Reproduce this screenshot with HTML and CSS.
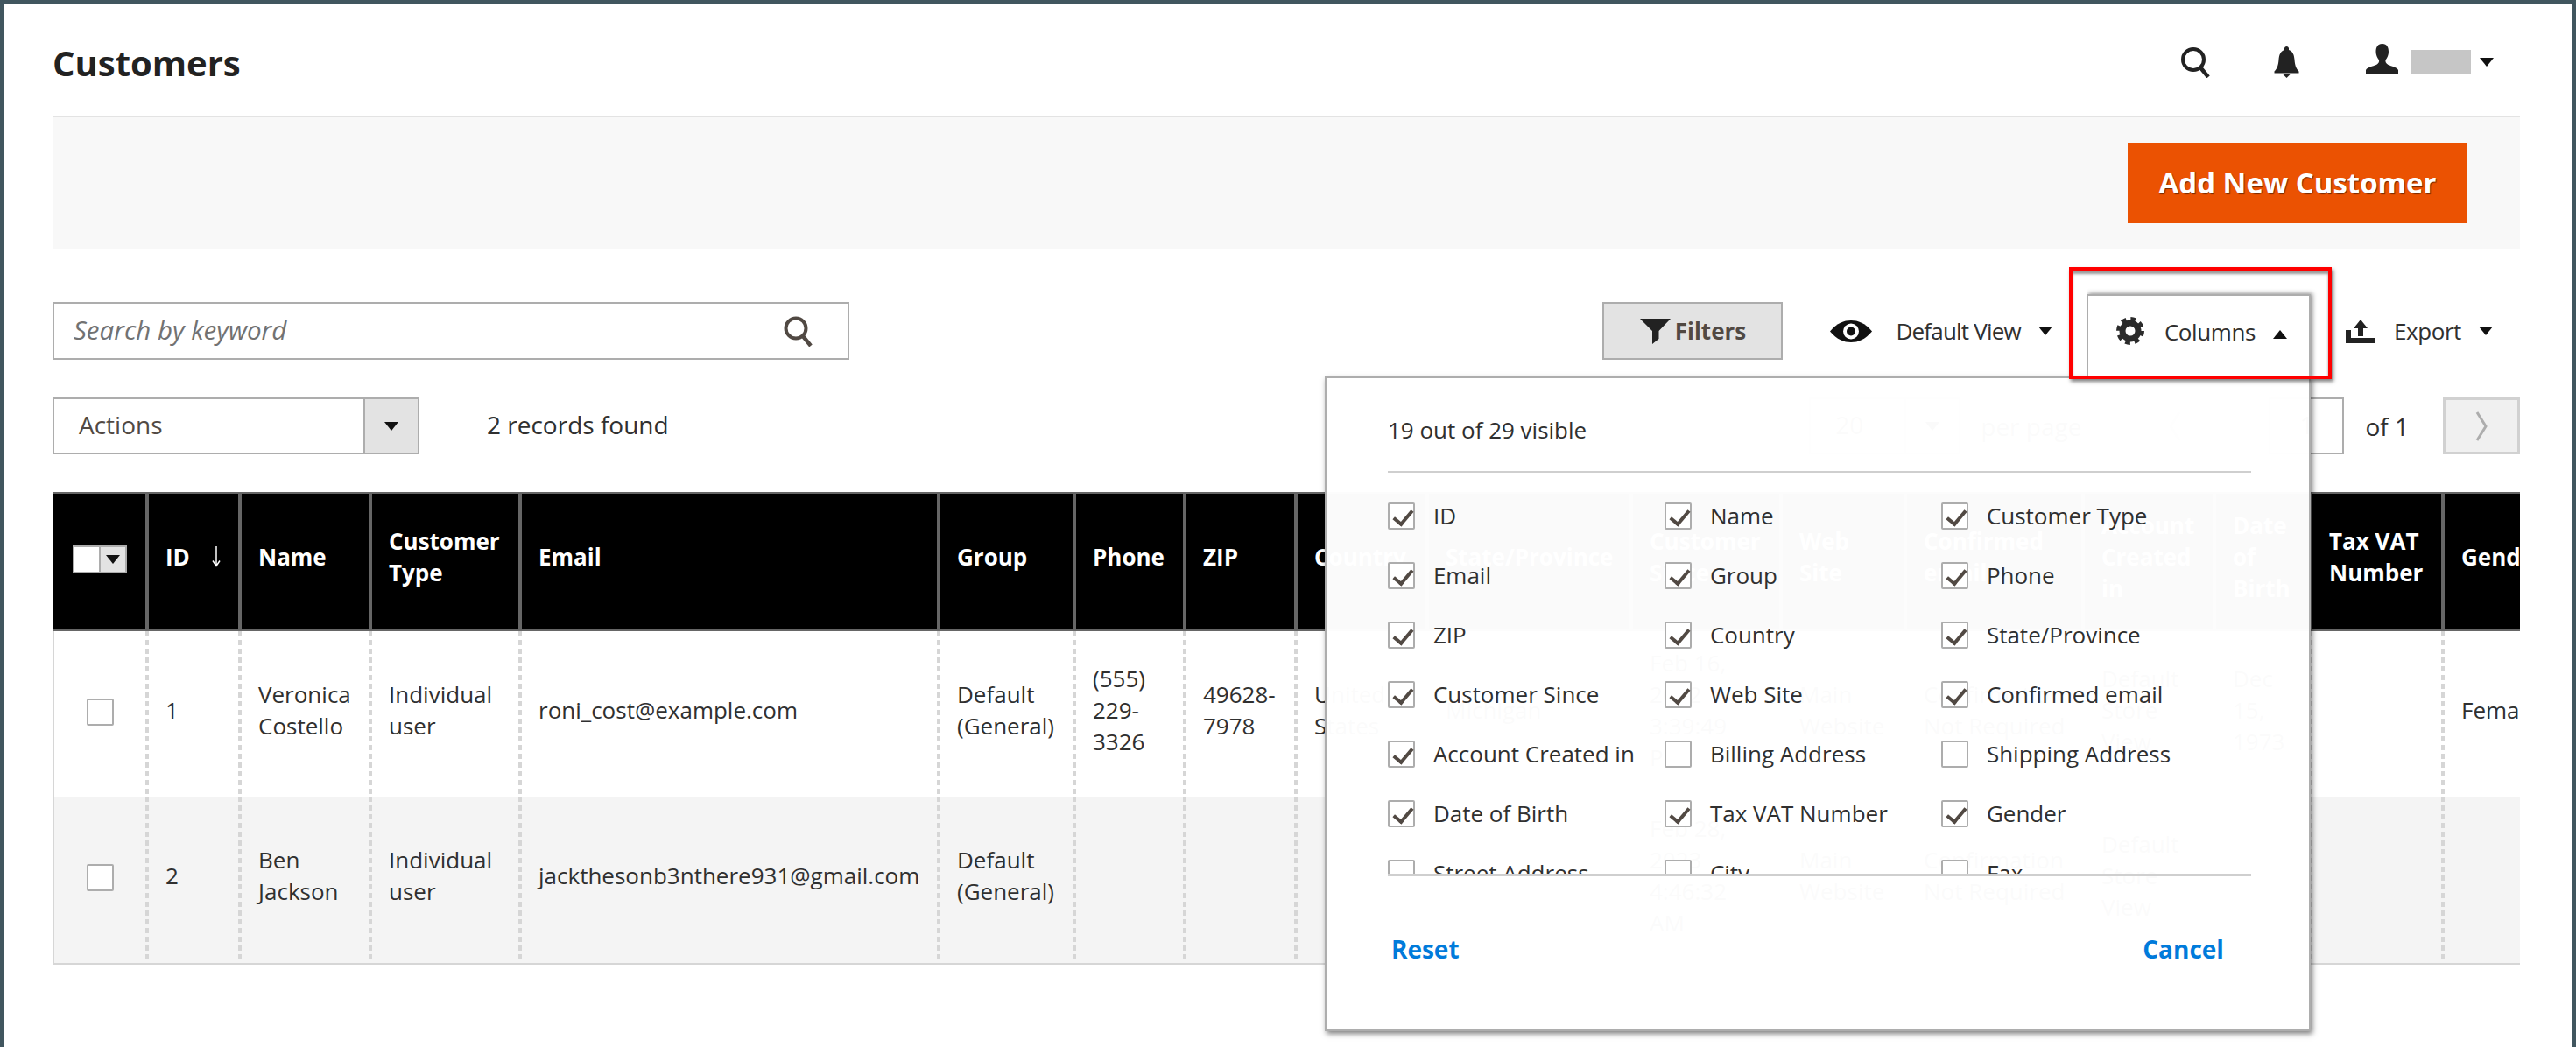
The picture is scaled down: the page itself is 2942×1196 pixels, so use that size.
FILE: index.html
```html
<!DOCTYPE html>
<html lang="en">
<head>
  <meta charset="UTF-8">
  <title>Customers</title>
  <link rel="stylesheet" href="styles.css">
</head>
<body>
  <div class="page">
    <header class="top">
      <h1>Customers</h1>
      <div class="top-actions">
        <svg class="ico-search" viewBox="0 0 35 35"><circle cx="14" cy="14" r="12" fill="none" stroke="#222" stroke-width="4"/><path d="M22 23l9 11" stroke="#222" stroke-width="4.500" fill="none"/></svg>
        <svg class="ico-bell" viewBox="0 0 29 36"><path fill="#222" d="M14.5 0c-1.5 0-2.5 1-2.5 2.5V4C7 6 6 10 5.500 15c-.5 6-1.500 10-5 13.500v2h28v-2c-3.500-3.500-4.500-7.500-5-13.500-.5-5-1.500-9-6.500-11V2.500C17 1 16 0 14.500 0zM10.500 32h8l-4 4z"/></svg>
        <div class="user">
          <svg class="ico-user" viewBox="0 0 37 35"><path fill="#222" d="M18.500 0c-5 0-7 4-7 9 0 4 1.500 7 3.500 9.500.5 2-.5 4-3 5.500C8 25.500 1 27 0 30v5h37v-5c-1-3-8-4.500-11.500-6-2.500-1.500-3.500-3.500-3-5.500 2-2.500 3.500-5.500 3.500-9.500 0-5-2-9-7-9z"/></svg>
          <span class="user-name"></span>
          <span class="caret"></span>
        </div>
      </div>
    </header>

    <div class="page-actions">
      <button class="btn-primary" type="button">Add New Customer</button>
    </div>

    <div class="toolbar">
      <label class="search">
        <input type="text" placeholder="Search by keyword">
        <svg class="ico-search-sm" viewBox="0 0 35 35"><circle cx="14" cy="14" r="11.500" fill="none" stroke="#514943" stroke-width="4"/><path d="M22 23l9 11" stroke="#514943" stroke-width="4.500" fill="none"/></svg>
      </label>
      <div class="tools">
        <button class="btn-filters" type="button">
          <svg viewBox="0 0 35 29"><path fill="#222" d="M0 0h35L21.500 14v9L14 29V14z"/></svg>
          Filters
        </button>
        <div class="tool tool-view">
          <svg class="ico-eye" viewBox="0 0 48 25"><path fill="#111" d="M0 12.500C8 3 16 0 24 0s16 3 24 12.500C40 22 32 25 24 25S8 22 0 12.500z"/><circle cx="24" cy="12.500" r="9" fill="#fff"/><circle cx="24" cy="12.500" r="5" fill="#111"/></svg>
          <span>Default View</span>
          <span class="caret"></span>
        </div>
        <div class="columns-menu">
          <div class="columns-tab">
            <svg class="ico-gear" viewBox="0 0 32 32"><circle cx="16" cy="16" r="9" fill="none" stroke="#2b2b2b" stroke-width="7"/><circle cx="16" cy="16" r="13.500" fill="none" stroke="#2b2b2b" stroke-width="5" stroke-dasharray="5.600 5"/></svg>
            <span>Columns</span>
            <span class="caret caret-up"></span>
          </div>

          <div class="columns-panel">
            <div class="panel-count">19 out of 29 visible</div>
            <div class="panel-list">
              <label class="opt"><span class="cb on"></span>ID</label>
              <label class="opt"><span class="cb on"></span>Name</label>
              <label class="opt"><span class="cb on"></span>Customer Type</label>
              <label class="opt"><span class="cb on"></span>Email</label>
              <label class="opt"><span class="cb on"></span>Group</label>
              <label class="opt"><span class="cb on"></span>Phone</label>
              <label class="opt"><span class="cb on"></span>ZIP</label>
              <label class="opt"><span class="cb on"></span>Country</label>
              <label class="opt"><span class="cb on"></span>State/Province</label>
              <label class="opt"><span class="cb on"></span>Customer Since</label>
              <label class="opt"><span class="cb on"></span>Web Site</label>
              <label class="opt"><span class="cb on"></span>Confirmed email</label>
              <label class="opt"><span class="cb on"></span>Account Created in</label>
              <label class="opt"><span class="cb"></span>Billing Address</label>
              <label class="opt"><span class="cb"></span>Shipping Address</label>
              <label class="opt"><span class="cb on"></span>Date of Birth</label>
              <label class="opt"><span class="cb on"></span>Tax VAT Number</label>
              <label class="opt"><span class="cb on"></span>Gender</label>
              <label class="opt"><span class="cb"></span>Street Address</label>
              <label class="opt"><span class="cb"></span>City</label>
              <label class="opt"><span class="cb"></span>Fax</label>
            </div>
            <div class="panel-foot">
              <a href="#">Reset</a>
              <a href="#">Cancel</a>
            </div>
          </div>

          <div class="callout"></div>
        </div>
        <div class="tool tool-export">
          <svg class="ico-export" viewBox="0 0 34 27"><path fill="#222" d="M17 0l-8 10h5v9h6v-9h5zM0 12h6v9h28v6H0z"/></svg>
          <span>Export</span>
          <span class="caret"></span>
        </div>
      </div>
    </div>

    <div class="pager-row">
      <div class="pager-left">
        <div class="select">
          <span class="select-value">Actions</span>
          <span class="select-btn"><span class="caret"></span></span>
        </div>
        <span class="records">2 records found</span>
      </div>
      <div class="pager-right">
        <div class="select select-size">
          <span class="select-value">20</span>
          <span class="select-btn"><span class="caret"></span></span>
        </div>
        <span class="per-page">per page</span>
        <svg class="chev chev-prev" viewBox="0 0 14 36"><path d="M12 2L2 18l10 16" fill="none" stroke="#adadad" stroke-width="3"/></svg>
        <span class="page-input">1</span>
        <span class="page-of">of 1</span>
        <span class="page-next"><svg class="chev" viewBox="0 0 14 36"><path d="M2 2l10 16L2 34" fill="none" stroke="#adadad" stroke-width="3"/></svg></span>
      </div>
    </div>

    <div class="grid-wrap">
      <table class="grid">
        <colgroup>
          <col class="c-check"><col class="c-id"><col class="c-name"><col class="c-type"><col class="c-email"><col class="c-group"><col class="c-phone"><col class="c-zip"><col class="c-country"><col class="c-state"><col class="c-since"><col class="c-site"><col class="c-confirm"><col class="c-created"><col class="c-dob"><col class="c-tax"><col class="c-gender">
        </colgroup>
        <thead>
          <tr>
            <th class="check-cell"><span class="multi"><span class="multi-box"></span><span class="multi-btn"><span class="caret"></span></span></span></th>
            <th><span class="id-head">ID<svg viewBox="0 0 10 24"><path d="M5 0v22.500M1 16.500l4 6 4-6" fill="none" stroke="#fff" stroke-width="1.500"/></svg></span></th>
            <th>Name</th>
            <th>Customer Type</th>
            <th>Email</th>
            <th>Group</th>
            <th>Phone</th>
            <th>ZIP</th>
            <th>Country</th>
            <th>State/Province</th>
            <th>Customer Since</th>
            <th>Web Site</th>
            <th>Confirmed email</th>
            <th>Account Created in</th>
            <th>Date of Birth</th>
            <th>Tax VAT Number</th>
            <th>Gender</th>
          </tr>
        </thead>
        <tbody>
          <tr>
            <td class="check-cell"><span class="cb"></span></td>
            <td>1</td>
            <td>Veronica Costello</td>
            <td>Individual user</td>
            <td>roni_cost@example.com</td>
            <td>Default (General)</td>
            <td>(555) 229-3326</td>
            <td>49628-7978</td>
            <td>United States</td>
            <td>Michigan</td>
            <td>Feb 16, 2022 3:39:49 PM</td>
            <td>Main Website</td>
            <td>Confirmation Not Required</td>
            <td>Default Store View</td>
            <td>Dec 15, 1973</td>
            <td></td>
            <td>Female</td>
          </tr>
          <tr>
            <td class="check-cell"><span class="cb"></span></td>
            <td>2</td>
            <td>Ben Jackson</td>
            <td>Individual user</td>
            <td>jackthesonb3nthere931@gmail.com</td>
            <td>Default (General)</td>
            <td></td>
            <td></td>
            <td></td>
            <td></td>
            <td>Feb 28, 2023 4:46:32 AM</td>
            <td>Main Website</td>
            <td>Confirmation Not Required</td>
            <td>Default Store View</td>
            <td></td>
            <td></td>
            <td></td>
          </tr>
        </tbody>
      </table>
    </div>
  </div>
</body>
</html>
```

FILE: styles.css
```css
* {
  box-sizing: border-box;
}

html, body {
  margin: 0;
  height: 100%;
}

body {
  font-family: "Open Sans", sans-serif;
  font-size: 26px;
  line-height: 36px;
  color: #303030;
  background: #fff;
  overflow: hidden;
}

.page {
  height: 1196px;
  border: solid #41565f;
  border-width: 4px 4px 0;
  padding: 0 60px 0 56px;
}

/* header */
.top {
  height: 130px;
  padding-top: 12px;
  display: flex;
  align-items: center;
  justify-content: space-between;
  border-bottom: 2px solid #e3e3e3;
}

.top h1 {
  margin: -4px 0 0;
  font-size: 40px;
  line-height: 50px;
  font-weight: 700;
  color: #222;
}

.top-actions {
  display: flex;
  align-items: center;
  margin: -6px 30px 0 0;
}

.ico-search {
  width: 35px;
  height: 35px;
  margin-right: 71px;
}

.ico-bell {
  width: 29px;
  height: 36px;
  margin-right: 76px;
}

.user {
  display: flex;
  align-items: center;
}

.ico-user {
  width: 37px;
  height: 35px;
  margin: -8px 14px 0 0;
}

.user-name {
  width: 69px;
  height: 28px;
  background: #c6c6c6;
  margin-right: 10px;
}

.caret {
  display: inline-block;
  width: 0;
  height: 0;
  border-style: solid;
  border-width: 10px 8px 0;
  border-color: #111 transparent transparent;
}

.caret-up {
  border-width: 0 8px 10px;
  border-color: transparent transparent #111;
}

/* page actions band */
.page-actions {
  height: 151px;
  background: #f8f8f8;
  display: flex;
  justify-content: flex-end;
  align-items: flex-start;
  padding: 29px 60px 0 0;
}

.btn-primary {
  width: 388px;
  height: 92px;
  border: 0;
  background: #eb5202;
  color: #fff;
  font: 700 33px "Open Sans", sans-serif;
  padding-bottom: 3px;
  text-shadow: 1px 1px 1px rgba(0, 0, 0, .5);
}

/* search and tools */
.toolbar {
  margin-top: 60px;
  height: 66px;
  display: flex;
  justify-content: space-between;
}

.search {
  width: 910px;
  height: 66px;
  border: 2px solid #adadad;
  display: flex;
  align-items: center;
  padding: 0 38px 0 22px;
}

.search input {
  flex: 1;
  border: 0;
  outline: 0;
  padding: 0 0 3px;
  font: italic 29.5px "Open Sans", sans-serif;
  color: #303030;
}

.search input::placeholder {
  color: #727272;
  opacity: 1;
}

.ico-search-sm {
  width: 35px;
  height: 35px;
}

.tools {
  display: flex;
  align-items: center;
  padding-right: 31px;
}

.btn-filters {
  width: 206px;
  height: 66px;
  background: #e3e3e3;
  border: 2px solid #adadad;
  color: #514943;
  font: 700 26px "Open Sans", sans-serif;
  display: flex;
  align-items: center;
  justify-content: center;
  gap: 5px;
  margin-right: 54px;
  padding: 0;
}

.btn-filters svg {
  width: 35px;
  height: 29px;
}

.tool {
  display: flex;
  align-items: center;
  letter-spacing: -.4px;
}

.tool-view {
  letter-spacing: -.8px;
  margin-right: 39px;
}

.ico-eye {
  width: 48px;
  height: 25px;
  margin-right: 27px;
}

.tool-view .caret {
  margin-left: 20px;
}

.tool-export {
  margin-left: 40px;
}

.ico-export {
  width: 34px;
  height: 27px;
  margin-right: 21px;
}

.tool-export .caret {
  margin-left: 20px;
}

/* columns dropdown */
.columns-menu {
  position: relative;
  width: 256px;
  align-self: stretch;
}

.columns-tab {
  position: absolute;
  z-index: 3;
  top: -9px;
  left: 0;
  width: 256px;
  height: 97px;
  background: #fff;
  border: solid #adadad;
  border-width: 2px 2px 0;
  display: flex;
  align-items: flex-start;
  padding: 23px 0 0 31px;
  letter-spacing: -.4px;
  box-shadow: 2px -1px 5px rgba(0, 0, 0, .45);
  clip-path: inset(-8px -8px 0 0);
}

.ico-gear {
  width: 32px;
  height: 32px;
  margin: 1px 23px 0 1px;
}

.columns-tab .caret {
  margin: 16px 0 0 20px;
}

.columns-panel {
  position: absolute;
  z-index: 2;
  top: 85px;
  right: 0;
  width: 1126px;
  height: 748px;
  background: rgba(255, 255, 255, .98);
  border: 2px solid #adadad;
  box-shadow: 2px 3px 6px rgba(0, 0, 0, .5);
  padding: 0 66px 0 70px;
}

.panel-count {
  height: 108px;
  padding-top: 41px;
  border-bottom: 2px solid #cfcfcf;
}

.panel-list {
  height: 446px;
  margin-top: 15px;
  overflow: hidden;
  display: grid;
  grid-template-columns: repeat(3, 316px);
  grid-auto-rows: 68px;
  border-bottom: 3px solid #cfcfcf;
}

.opt {
  display: flex;
  align-items: center;
  gap: 21px;
  white-space: nowrap;
}

.panel-foot {
  display: flex;
  justify-content: space-between;
  margin-top: 65px;
  padding: 0 31px 0 4px;
  font-size: 28px;
}

.panel-foot a {
  color: #007bdb;
  font-weight: 700;
  text-decoration: none;
}

.callout {
  position: absolute;
  z-index: 4;
  top: -40px;
  left: -20px;
  width: 300px;
  height: 128px;
  border: 4px solid #f00;
  box-shadow: 2px 3px 4px rgba(0, 0, 0, .5), inset 0 4px 3px rgba(0, 0, 0, .4);
  pointer-events: none;
}

.cb {
  position: relative;
  display: inline-block;
  flex: none;
  width: 31px;
  height: 31px;
  background: #fff;
  border: 2px solid #adadad;
  border-radius: 2px;
}

.cb.on::after {
  content: "";
  position: absolute;
  left: 9px;
  top: 2px;
  width: 9px;
  height: 18px;
  border: solid #514943;
  border-width: 0 4px 4px 0;
  transform: rotate(40deg);
}

/* pager */
.pager-row {
  margin-top: 42px;
  height: 67px;
  display: flex;
  justify-content: space-between;
  align-items: center;
  font-size: 28px;
}

.pager-left,
.pager-right {
  display: flex;
  align-items: center;
}

.select {
  width: 419px;
  height: 65px;
  border: 2px solid #adadad;
  display: flex;
  color: #514943;
}

.select-value {
  flex: 1;
  padding-left: 28px;
  line-height: 59px;
}

.select-btn {
  width: 62px;
  background: #e3e3e3;
  border-left: 2px solid #adadad;
  display: flex;
  align-items: center;
  justify-content: center;
}

.records {
  margin: -3px 0 0 77px;
}

.select-size {
  width: 173px;
  margin-right: 23px;
}

.per-page {
  margin-right: 100px;
}

.chev {
  width: 14px;
  height: 36px;
}

.chev-prev {
  margin-right: 100px;
}

.page-input {
  width: 86px;
  height: 65px;
  border: 2px solid #adadad;
  text-align: center;
  line-height: 59px;
}

.page-of {
  margin: 0 39px 0 24px;
}

.page-next {
  width: 88px;
  height: 65px;
  background: #f0f0f0;
  border: 3px solid #d1d1d1;
  display: flex;
  align-items: center;
  justify-content: center;
}

/* table */
.grid-wrap {
  margin-top: 42px;
  overflow: hidden;
}

.grid {
  table-layout: fixed;
  width: 2880px;
  border-collapse: separate;
  border-spacing: 0;
}

.c-check { width: 106px; }
.c-id { width: 106px; }
.c-name { width: 149px; }
.c-type { width: 171px; }
.c-email { width: 478px; }
.c-group { width: 155px; }
.c-phone { width: 126px; }
.c-zip { width: 127px; }
.c-country { width: 150px; }
.c-state { width: 233px; }
.c-since { width: 171px; }
.c-site { width: 142px; }
.c-confirm { width: 203px; }
.c-created { width: 150px; }
.c-dob { width: 110px; }
.c-tax { width: 151px; }
.c-gender { width: 152px; }

.grid th {
  height: 159px;
  background: #000;
  color: #fff;
  font-weight: 700;
  text-align: left;
  padding: 0 18px 10px 19px;
  border: solid #666;
  border-width: 2px 0 3px 4px;
}

.grid td {
  height: 189px;
  padding: 0 18px 10px 23px;
  vertical-align: middle;
  background: repeating-linear-gradient(#d6d6d6 0 6px, transparent 6px 10px) left top / 4px 100% no-repeat;
}

.grid tbody tr:nth-child(even) td {
  height: 192px;
  background-color: #f4f4f4;
  border-bottom: 2px solid #d6d6d6;
}

.grid th.check-cell,
.grid td.check-cell {
  text-align: center;
  padding: 0 0 10px;
  background-image: none;
}

.grid th.check-cell {
  border-left: 0;
  padding-left: 1px;
}

.grid td.check-cell {
  border-left: 2px solid #d6d6d6;
}

.grid td.check-cell .cb {
  vertical-align: middle;
}

.multi {
  display: inline-flex;
  vertical-align: middle;
  width: 62px;
  height: 32px;
  border: 2px solid #adadad;
  background: #fff;
}

.multi-box {
  flex: 1;
}

.multi-btn {
  width: 30px;
  background: #e3e3e3;
  border-left: 2px solid #adadad;
  display: flex;
  align-items: center;
  justify-content: center;
}

.id-head {
  display: flex;
  align-items: center;
  gap: 25px;
}

.id-head svg {
  width: 10px;
  height: 24px;
}
```
